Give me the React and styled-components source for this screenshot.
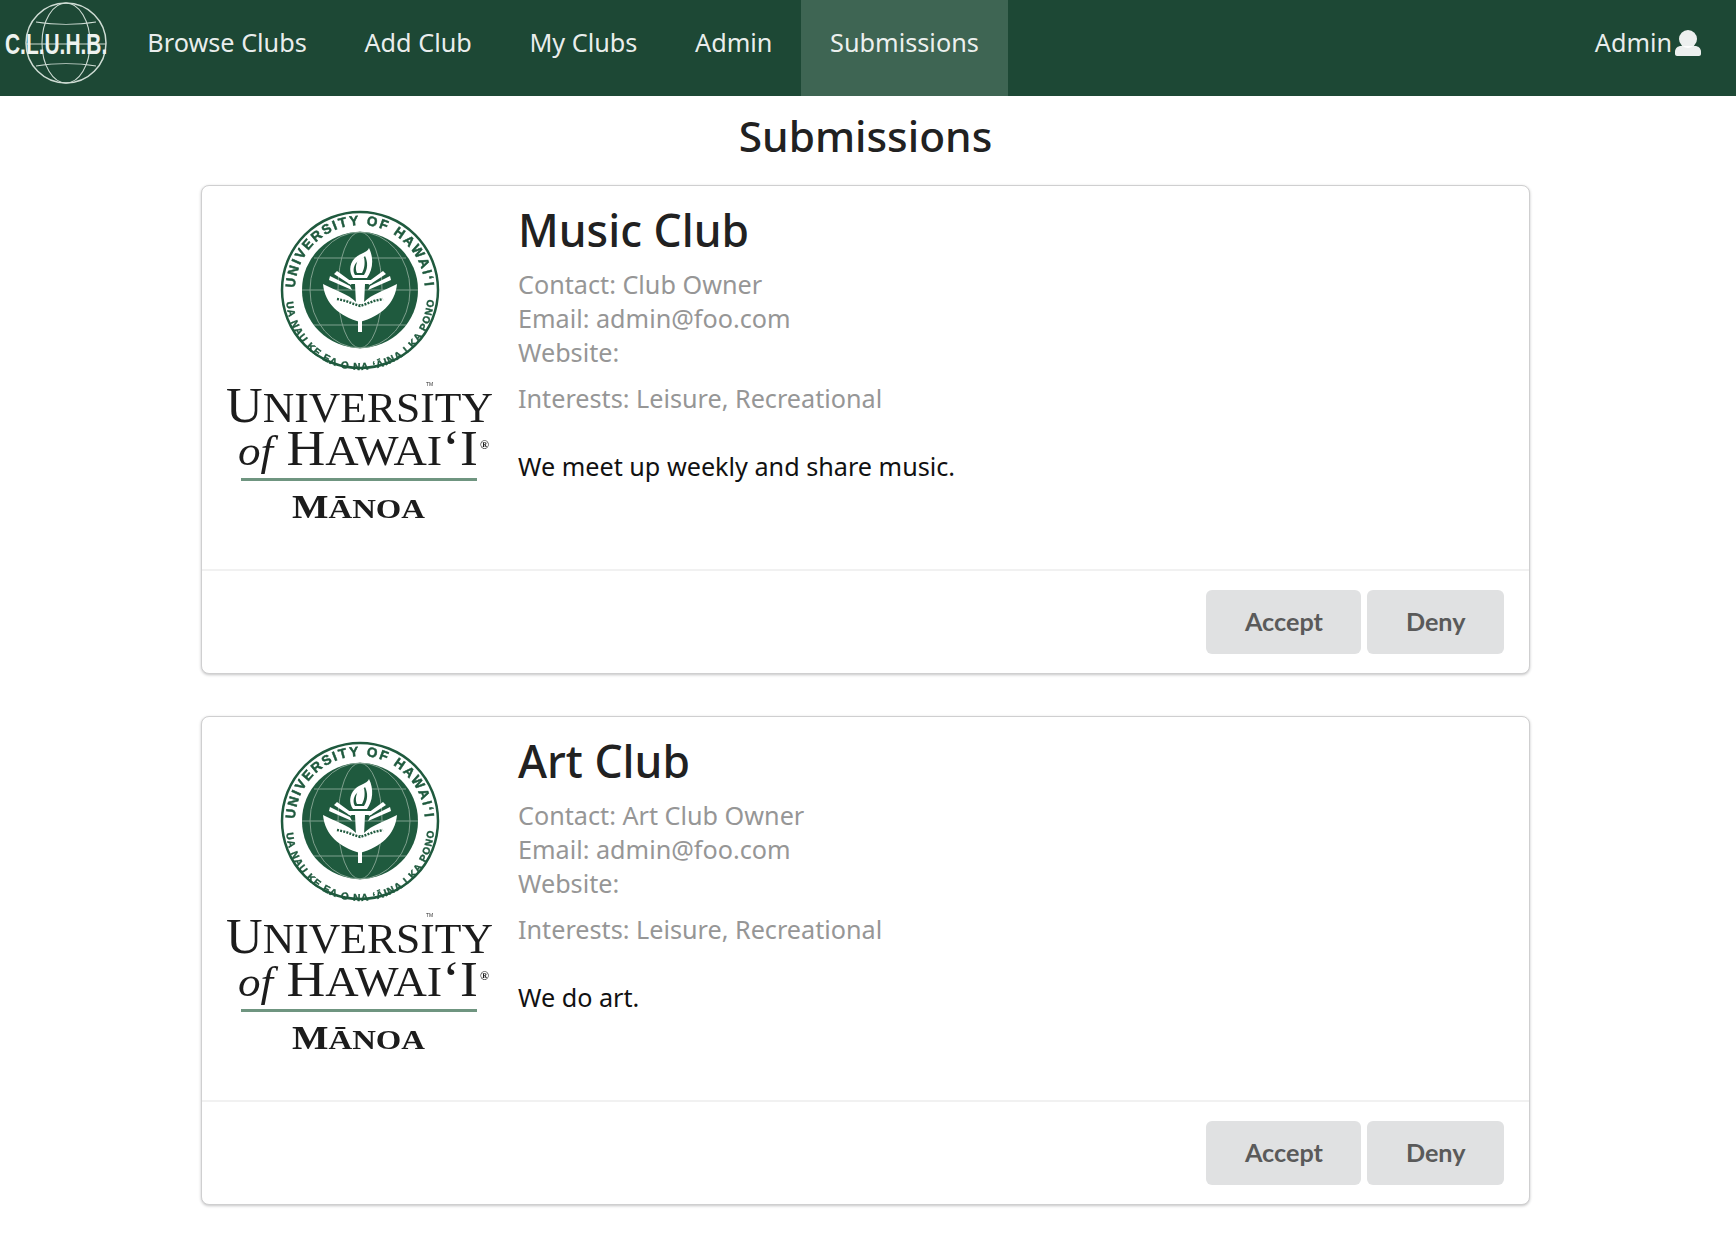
import styled, { createGlobalStyle } from "styled-components";

const GlobalStyle = createGlobalStyle`
  body {
    margin: 0;
    background: #fff;
    font-family: "Noto Sans", "Open Sans", sans-serif;
  }
`;

const clubs = [
  {
    id: "music",
    name: "Music Club",
    contact: "Club Owner",
    description: "We meet up weekly and share music.",
  },
  {
    id: "art",
    name: "Art Club",
    contact: "Art Club Owner",
    description: "We do art.",
  },
];

const navLinks = ["Browse Clubs", "Add Club", "My Clubs", "Admin", "Submissions"];

const ClubLogo = () => (
  <LogoSvg viewBox="0 0 118 96">
    <g fill="none" stroke="#cfdcd4" strokeWidth="1.1">
      <circle cx="66" cy="43" r="40" strokeWidth="1.5" />
      <ellipse cx="66" cy="43" rx="24" ry="40" />
      <path d="M36 22c18 3 42 3 60 0M26 44h80M36 66c18-3 42-3 60 0" />
    </g>
    <text
      transform="translate(5 54) scale(0.91 1.3)"
      fill="#eef2ef"
      fontFamily="Liberation Sans"
      fontWeight="700"
      fontSize="23"
    >
      C.L.U.H.B.
    </text>
  </LogoSvg>
);

const UserIcon = () => (
  <UserSvg viewBox="0 0 26 26">
    <circle cx="13" cy="9" r="9" fill="currentColor" />
    <path
      d="M6 16h14c3 0 6 2 6 6v2c0 1-1 2-2 2H2c-1 0-2-1-2-2v-2c0-4 3-6 6-6z"
      fill="currentColor"
    />
  </UserSvg>
);

const UhLogo = ({ id }) => (
  <UhSvg viewBox="0 0 280 330">
    <defs>
      <path id={`${id}-top`} d="M73 90a65 65 0 0 1 130 0" />
      <path id={`${id}-bottom`} d="M64 96a74 74 0 0 0 148 0" />
    </defs>
    <circle cx="138" cy="90" r="78" fill="#fff" stroke="#1f5a3e" strokeWidth="2.5" />
    <circle cx="138" cy="90" r="58" fill="#1f5a3e" />
    <text
      fill="#1f5a3e"
      stroke="#1f5a3e"
      strokeWidth="0.5"
      fontFamily="Liberation Sans"
      fontWeight="700"
      fontSize="13.5"
    >
      <textPath href={`#${id}-top`} textLength="198" startOffset="2">
        UNIVERSITY OF HAWAI‘I
      </textPath>
    </text>
    <text
      fill="#1f5a3e"
      stroke="#1f5a3e"
      strokeWidth="0.4"
      fontFamily="Liberation Sans"
      fontWeight="700"
      fontSize="10"
    >
      <textPath href={`#${id}-bottom`} textLength="222" startOffset="6">
        UA NAU KE EA O NA ‘ĀINA I KA PONO
      </textPath>
    </text>
    <g fill="none" stroke="#7fa08e" strokeWidth="1">
      <ellipse cx="138" cy="90" rx="22" ry="58" />
      <ellipse cx="138" cy="90" rx="50" ry="58" />
      <path d="M92 58h92M80 90h116M92 125h92" />
    </g>
    <path d="M147 48c-2 5-9 5-14 10-6 6-6 14-2 20h14c6-8 7-20 2-30z" fill="#fff" />
    <path d="M143 56c-2 3-6 4-9 7-3 4-3 9-1 12h9c4-6 4-13 1-19z" fill="#1f5a3e" />
    <path d="M136 60c3-1 5-2 6-3 1 5 1 11-2 16h-5c-2-4-1-9 1-13z" fill="#fff" />
    <path d="M124 80h28l-3 4h-6l-1 20h-8l-1-20h-6z" fill="#fff" />
    <path d="M108 76l20 10 2 4-23-10zM168 76l-20 10-2 4 23-10z" fill="#fff" />
    <path d="M115 71l15 11-1 3-17-11zM161 71l-15 11 1 3 17-11z" fill="#fff" />
    <path
      d="M101 84c14 7 25 10 33 18l4 3 4-3c8-8 19-11 33-18-2 20-16 32-37 38-21-6-35-18-37-38z"
      fill="#fff"
    />
    <path d="M136 118h4v14h-4z" fill="#fff" />
    <path
      d="M115 99l9 2 8 3 6 2 6-2 8-3 9-2"
      fill="none"
      stroke="#1f5a3e"
      strokeWidth="2.4"
      strokeDasharray="2 1.2"
    />
    <text x="204" y="186" fill="#333" fontFamily="Liberation Sans" fontSize="5">TM</text>
    <g fill="#1c1c1c" fontFamily="Liberation Serif">
      <text x="4" y="222" fontSize="50" textLength="267" lengthAdjust="spacingAndGlyphs">
        U<tspan fontSize="43">NIVERSITY</tspan>
      </text>
      <text x="16" y="265" fontSize="50" textLength="240" lengthAdjust="spacingAndGlyphs">
        <tspan fontStyle="italic" fontSize="42">of</tspan> H<tspan fontSize="43">AWAI</tspan>‘I
      </text>
      <text x="258" y="249" fontSize="12" fontWeight="700">®</text>
      <text x="70" y="318" fontSize="33" fontWeight="700" textLength="133" lengthAdjust="spacingAndGlyphs">
        M<tspan fontSize="28">ĀNOA</tspan>
      </text>
    </g>
    <rect x="19" y="278" width="236" height="3" fill="#6f9580" />
  </UhSvg>
);

const App = () => (
  <>
    <GlobalStyle />
    <NavBar>
      <LogoSlot>
        <ClubLogo />
      </LogoSlot>
      {navLinks.map((link) => (
        <NavLink key={link} $active={link === "Submissions"}>
          {link}
        </NavLink>
      ))}
      <UserMenu>
        Admin
        <UserIcon />
      </UserMenu>
    </NavBar>
    <Page>
      <Heading>Submissions</Heading>
      {clubs.map((club) => (
        <Card key={club.id}>
          <CardBody>
            <UhLogo id={club.id} />
            <CardText>
              <ClubName>{club.name}</ClubName>
              <Meta>
                Contact: {club.contact}
                <br />
                Email: admin@foo.com
                <br />
                Website:
              </Meta>
              <Interests>Interests: Leisure, Recreational</Interests>
              <Description>{club.description}</Description>
            </CardText>
          </CardBody>
          <CardFooter>
            <ActionButton>Accept</ActionButton>
            <ActionButton>Deny</ActionButton>
          </CardFooter>
        </Card>
      ))}
    </Page>
  </>
);

export default App;

const NavBar = styled.nav`
  display: flex;
  align-items: stretch;
  height: 96px;
  background: #1d4835;
  color: rgba(255, 255, 255, 0.92);
`;

const LogoSlot = styled.div`
  width: 118.5px;
  flex: none;
`;

const LogoSvg = styled.svg`
  display: block;
  width: 118px;
  height: 96px;
`;

const NavLink = styled.a`
  display: flex;
  align-items: center;
  padding: 0 28.8px 12px;
  font-size: 25.25px;
  background: ${(p) => (p.$active ? "#3e6553" : "transparent")};
`;

const UserMenu = styled.div`
  display: flex;
  align-items: center;
  gap: 3px;
  margin-left: auto;
  padding: 0 35px 12px 0;
  font-size: 25.2px;
`;

const UserSvg = styled.svg`
  display: block;
  width: 26px;
  height: 26px;
  margin-top: 1px;
`;

const Page = styled.main`
  display: flex;
  flex-direction: column;
  gap: 42px;
  padding: 0 206px 30px 201px;
`;

const Heading = styled.h1`
  margin: 15px 0 -17px;
  height: 49px;
  text-align: center;
  font-size: 42.4px;
  font-weight: 500;
  line-height: 50px;
  color: #212121;
`;

const Card = styled.section`
  display: flex;
  flex-direction: column;
  height: 489px;
  box-sizing: border-box;
  border: 1px solid #cfcfd0;
  border-radius: 8px;
  box-shadow: 0 1px 3px #c4c4c5;
  background: #fff;
`;

const CardBody = styled.div`
  flex: 1;
  display: flex;
  gap: 16px;
  padding: 14px 25px 0 20px;
  border-bottom: 2px solid #f1f1f1;
`;

const UhSvg = styled.svg`
  display: block;
  flex: none;
  width: 280px;
  height: 330px;
  filter: blur(0.4px);
`;

const CardText = styled.div`
  display: flex;
  flex-direction: column;
  padding-top: 3px;
`;

const ClubName = styled.h2`
  margin: 0 0 10px;
  font-size: 44.4px;
  font-weight: 500;
  line-height: 54px;
  color: #212121;
`;

const Meta = styled.div`
  font-size: 25.2px;
  line-height: 34px;
  color: #969696;
`;

const Interests = styled.div`
  margin-top: 12px;
  font-size: 25.2px;
  line-height: 34px;
  color: #969696;
`;

const Description = styled.p`
  margin: 34px 0 0;
  font-size: 25.2px;
  line-height: 34px;
  color: #111;
`;

const CardFooter = styled.div`
  display: flex;
  justify-content: flex-end;
  gap: 6px;
  padding: 19px 25px 19px;
`;

const ActionButton = styled.button`
  height: 64px;
  padding: 0 38.5px 2px;
  border: none;
  border-radius: 6px;
  background: #e0e1e2;
  color: #5a5a5a;
  font-family: Lato, sans-serif;
  font-size: 25.2px;
  font-weight: 700;
`;
